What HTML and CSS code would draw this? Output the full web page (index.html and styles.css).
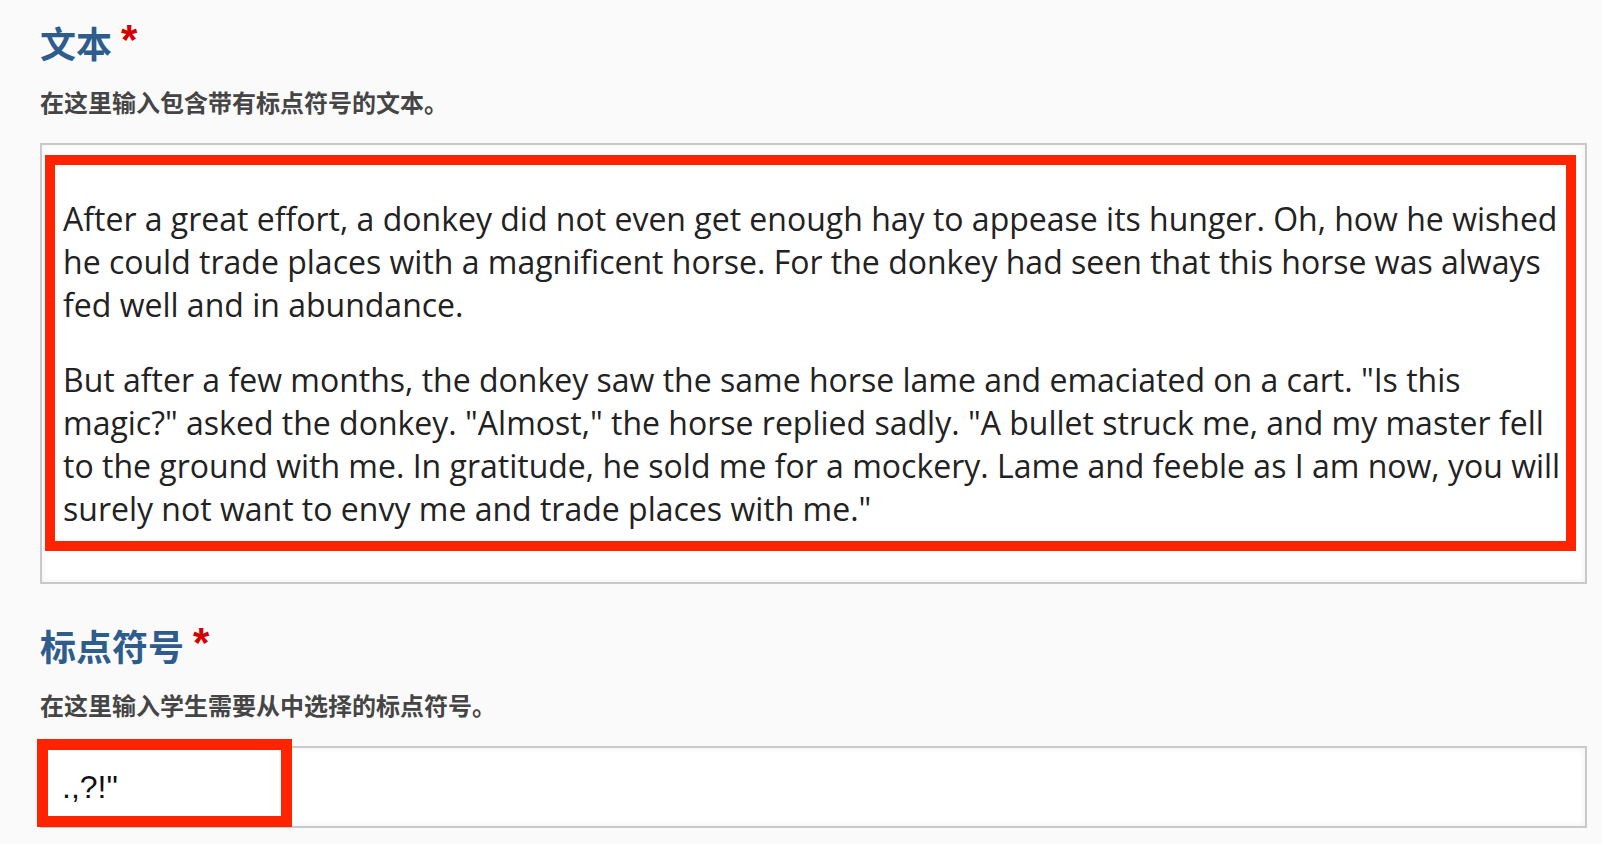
FILE: index.html
```html
<!DOCTYPE html>
<html lang="zh">
<head>
<meta charset="utf-8">
<title>标点符号练习</title>
<link rel="stylesheet" href="styles.css">
</head>
<body>
<div class="form">
  <div class="field">
    <h2 class="label">文本<span class="req">*</span></h2>
    <p class="help">在这里输入包含带有标点符号的文本。</p>
    <div class="textarea-box">
      <div class="annot">
        <p>After a great effort, a donkey did not even get enough hay to appease its hunger. Oh, how he wished he could trade places with a magnificent horse. For the donkey had seen that this horse was always fed well and in abundance.</p>
        <p>But after a few months, the donkey saw the same horse lame and emaciated on a cart. "Is this magic?" asked the donkey. "Almost," the horse replied sadly. "A bullet struck me, and my master fell to the ground with me. In gratitude, he sold me for a mockery. Lame and feeble as I am now, you will surely not want to envy me and trade places with me."</p>
      </div>
    </div>
  </div>
  <div class="field field-second">
    <h2 class="label">标点符号<span class="req">*</span></h2>
    <p class="help">在这里输入学生需要从中选择的标点符号。</p>
    <div class="input-wrap">
      <div class="input-box">.,?!"</div>
      <div class="annot-small"></div>
    </div>
  </div>
</div>
</body>
</html>
```

FILE: styles.css
```css
html, body {
  margin: 0;
  padding: 0;
}
body {
  background: #fafafa;
  font-family: "Noto Sans CJK SC", "Noto Sans", sans-serif;
}
.form {
  padding: 20px 15px 0 40px;
}
.label {
  margin: 0;
  font-size: 36px;
  line-height: 44px;
  font-weight: 700;
  color: #2d5c8d;
  display: flex;
  align-items: flex-start;
}
.req {
  font-family: "Liberation Sans", Arial, sans-serif;
  font-weight: 700;
  color: #d40000;
  font-size: 42px;
  line-height: 42px;
  margin-left: 9px;
  margin-top: -1px;
}
.help {
  margin: 22px 0 0 0;
  font-size: 24px;
  line-height: 32px;
  font-weight: 700;
  color: #454545;
}
.textarea-box {
  margin-top: 25px;
  border: 2px solid #c9c9c9;
  background: #fff;
  box-shadow: inset 0 0 6px rgba(0, 0, 0, 0.07);
  padding: 10px 9px 31px 3px;
}
.annot {
  border: 10px solid #ff2300;
  background: #fff;
  padding: 0 0 0 8px;
}
.annot p {
  margin: 32px 0;
  font-family: "Open Sans", "Noto Sans", sans-serif;
  font-size: 32px;
  line-height: 43px;
  color: #222;
}
.annot p:last-child {
  margin-bottom: 11px;
}
.field-second {
  margin-top: 39px;
}
.input-wrap {
  position: relative;
  margin-top: 25px;
}
.input-box {
  height: 78px;
  border: 2px solid #c9c9c9;
  background: #fff;
  box-shadow: inset 0 0 6px rgba(0, 0, 0, 0.07);
  padding: 0 20px;
  display: flex;
  align-items: center;
  font-family: "Liberation Sans", Arial, sans-serif;
  font-size: 32px;
  color: #111;
}
.annot-small {
  position: absolute;
  left: -3px;
  top: -7px;
  width: 233px;
  height: 66px;
  border: 11px solid #ff2300;
}
```
